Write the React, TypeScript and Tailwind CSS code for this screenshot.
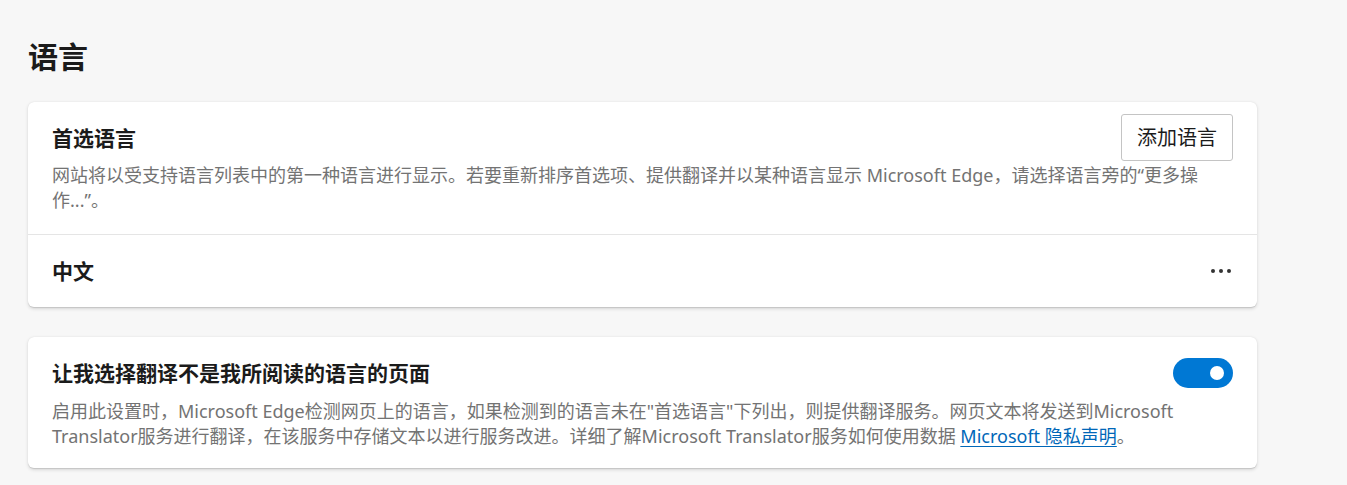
export default function App() {
  const font = { fontFamily: '"Noto Sans", "Noto Sans CJK SC", sans-serif' };
  return (
    <div className="min-h-[485px] w-full bg-[#f7f7f7] pl-[28px] pr-[90px] pt-[37px]" style={font}>
      {/* 标题 */}
      <h1 className="text-[30px] leading-[40px] font-bold text-[#1b1b1b]">语言</h1>

      {/* 首选语言 */}
      <div className="mt-[25px] w-[1229px] rounded-[6px] bg-white shadow-[0_1.6px_3.6px_rgba(0,0,0,0.13),0_0.3px_0.9px_rgba(0,0,0,0.11)]">
        <div className="px-[24px] pt-[12px] pb-[21px]">
          <div className="flex items-center justify-between">
            <div className="text-[21px] leading-[28px] font-bold text-[#1b1b1b]">首选语言</div>
            <button className="h-[47px] w-[112px] rounded-[3px] border border-[#c4c4c4] bg-white text-[20px] text-[#1b1b1b]">
              添加语言
            </button>
          </div>
          <p className="mt-[2px] text-[18px] leading-[25px] text-[#737373]">
            网站将以受支持语言列表中的第一种语言进行显示。若要重新排序首选项、提供翻译并以某种语言显示 Microsoft Edge，请选择语言旁的“更多操
            <br />
            作...”。
          </p>
        </div>
        <div className="flex h-[73px] items-center justify-between border-t border-[#e5e5e5] px-[24px]">
          <div className="text-[21px] leading-[28px] font-bold text-[#1b1b1b]">中文</div>
          <div className="flex items-center gap-[4px] pr-[2px]">
            <span className="h-[4px] w-[4px] rounded-full bg-[#333]" />
            <span className="h-[4px] w-[4px] rounded-full bg-[#333]" />
            <span className="h-[4px] w-[4px] rounded-full bg-[#333]" />
          </div>
        </div>
      </div>

      {/* 翻译 */}
      <div className="mt-[30px] w-[1229px] rounded-[6px] bg-white px-[24px] pt-[21px] pb-[19px] shadow-[0_1.6px_3.6px_rgba(0,0,0,0.13),0_0.3px_0.9px_rgba(0,0,0,0.11)]">
        <div className="flex h-[30px] items-center justify-between">
          <div className="text-[21px] leading-[28px] font-bold text-[#1b1b1b]">让我选择翻译不是我所阅读的语言的页面</div>
          <div className="flex h-[30px] w-[60px] items-center justify-end rounded-full bg-[#0078d4] pr-[9px]">
            <span className="h-[14px] w-[14px] rounded-full bg-white" />
          </div>
        </div>
        <p className="mt-[11px] text-[18px] leading-[25px] text-[#737373]">
          启用此设置时，Microsoft Edge检测网页上的语言，如果检测到的语言未在"首选语言"下列出，则提供翻译服务。网页文本将发送到Microsoft
          <br />
          Translator服务进行翻译，在该服务中存储文本以进行服务改进。详细了解Microsoft Translator服务如何使用数据{' '}
          <a className="text-[#0067b8] underline underline-offset-[3px] decoration-[#0067b8]">Microsoft 隐私声明</a>。
        </p>
      </div>
    </div>
  );
}
